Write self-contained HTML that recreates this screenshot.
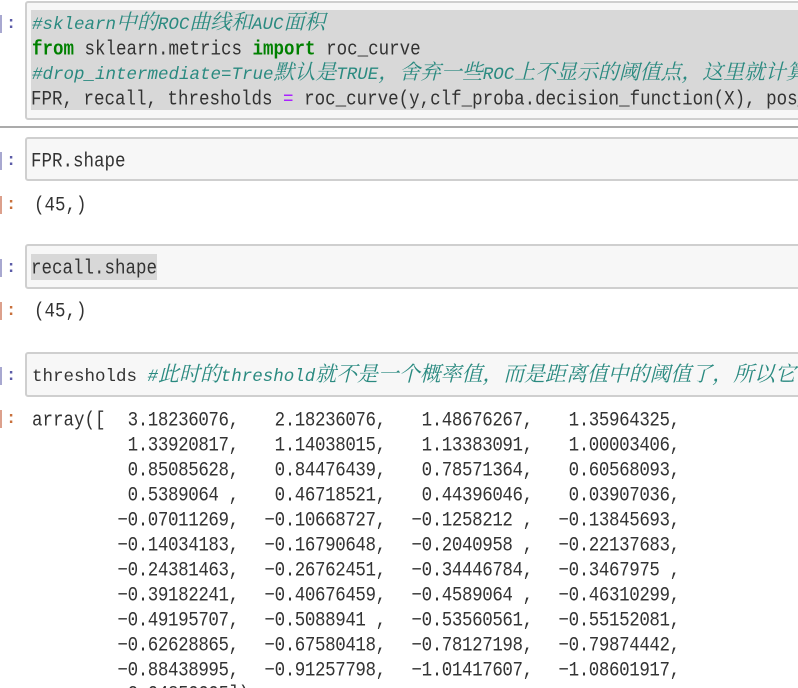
<!DOCTYPE html>
<html><head><meta charset="utf-8">
<style>
html,body{margin:0;padding:0;background:#fff}
#p{position:relative;width:798px;height:688px;overflow:hidden;background:#fff;filter:blur(.3px);
font-family:"Liberation Mono","Noto Serif CJK SC",monospace;font-size:17.5px;color:#333}
.box{position:absolute;left:25px;width:790px;box-sizing:border-box;background:#f7f7f7;border:2px solid #cfcfcf;border-radius:3px}
.sel{position:absolute;background:#d8d8d8}
.l{position:absolute;white-space:pre;line-height:25px;height:25px;margin-top:2px}
.t{transform:scaleY(1.14);transform-origin:50% 50%}
.n{left:117.5px;letter-spacing:-.4px}
.n span{display:inline-block;width:147px}
.c{color:#2a8a80;font-style:italic}
.z{font-size:20.9px;line-height:0}
.k{color:#008000;font-weight:bold}
.o{color:#aa22ff}
.b{position:absolute;left:0;width:2px;background:#a8a8d0;margin-top:1px}
.r{position:absolute;left:0;width:2px;background:#dca08c;margin-top:1px}
.d{position:absolute;left:6px;line-height:20px;font-size:17px;font-weight:bold;margin-top:1px}
.in{color:#5c5ca8}.out{color:#c8703c}
</style></head><body><div id="p">

<div class="b" style="top:14px;height:18px"></div><div class="d in" style="top:14px">:</div>
<div class="box" style="top:1px;height:119px"></div>
<div class="sel" style="left:31px;top:10px;width:767px;height:100px"></div>
<div class="l" style="left:32px;top:11px"><span class="c">#sklearn<span class="z">中的</span>ROC<span class="z">曲线和</span>AUC<span class="z">面积</span></span></div>
<div class="l t" style="left:32px;top:36px"><span class="k">from</span> sklearn.metrics <span class="k">import</span> roc_curve</div>
<div class="l" style="left:32px;top:61px"><span class="c">#drop_intermediate=True<span class="z">默认是</span>TRUE<span class="z">，舍弃一些</span>ROC<span class="z">上不显示的阈值点，这里就计算</span></span></div>
<div class="l t" style="left:31px;top:86px">FPR, recall, thresholds <span class="o">=</span> roc_curve(y,clf_proba.decision_function(X), pos_label=1)</div>

<div style="position:absolute;left:0;top:126px;width:798px;height:2px;background:#ababab"></div>

<div class="b" style="top:151px;height:18px"></div><div class="d in" style="top:151px">:</div>
<div class="box" style="top:137px;height:44px"></div>
<div class="l t" style="left:31px;top:148px">FPR.shape</div>

<div class="r" style="top:195px;height:18px"></div><div class="d out" style="top:195px">:</div>
<div class="l t" style="left:34px;top:192px">(45,)</div>

<div class="b" style="top:258px;height:18px"></div><div class="d in" style="top:258px">:</div>
<div class="box" style="top:244px;height:45px"></div>
<div class="sel" style="left:31px;top:254px;width:126px;height:26px"></div>
<div class="l t" style="left:31px;top:255px">recall.shape</div>

<div class="r" style="top:301px;height:18px"></div><div class="d out" style="top:301px">:</div>
<div class="l t" style="left:34px;top:298px">(45,)</div>

<div class="b" style="top:366px;height:18px"></div><div class="d in" style="top:366px">:</div>
<div class="box" style="top:352px;height:45px"></div>
<div class="l" style="left:32px;top:363px">thresholds <span class="c">#<span class="z">此时的</span>threshold<span class="z">就不是一个概率值，而是距离值中的阈值了，所以它可以</span></span></div>

<div class="r" style="top:409px;height:18px"></div><div class="d out" style="top:409px">:</div>
<div class="l t" style="left:32px;top:407px">array([</div>
<div class="l n t" style="top:407px"><span> 3.18236076,</span><span> 2.18236076,</span><span> 1.48676267,</span><span> 1.35964325,</span></div>
<div class="l n t" style="top:432px"><span> 1.33920817,</span><span> 1.14038015,</span><span> 1.13383091,</span><span> 1.00003406,</span></div>
<div class="l n t" style="top:457px"><span> 0.85085628,</span><span> 0.84476439,</span><span> 0.78571364,</span><span> 0.60568093,</span></div>
<div class="l n t" style="top:482px"><span> 0.5389064 ,</span><span> 0.46718521,</span><span> 0.44396046,</span><span> 0.03907036,</span></div>
<div class="l n t" style="top:507px"><span>−0.07011269,</span><span>−0.10668727,</span><span>−0.1258212 ,</span><span>−0.13845693,</span></div>
<div class="l n t" style="top:532px"><span>−0.14034183,</span><span>−0.16790648,</span><span>−0.2040958 ,</span><span>−0.22137683,</span></div>
<div class="l n t" style="top:557px"><span>−0.24381463,</span><span>−0.26762451,</span><span>−0.34446784,</span><span>−0.3467975 ,</span></div>
<div class="l n t" style="top:582px"><span>−0.39182241,</span><span>−0.40676459,</span><span>−0.4589064 ,</span><span>−0.46310299,</span></div>
<div class="l n t" style="top:607px"><span>−0.49195707,</span><span>−0.5088941 ,</span><span>−0.53560561,</span><span>−0.55152081,</span></div>
<div class="l n t" style="top:632px"><span>−0.62628865,</span><span>−0.67580418,</span><span>−0.78127198,</span><span>−0.79874442,</span></div>
<div class="l n t" style="top:657px"><span>−0.88438995,</span><span>−0.91257798,</span><span>−1.01417607,</span><span>−1.08601917,</span></div>
<div class="l n t" style="top:681px"><span>−2.04850095])</span></div>

</div></body></html>
